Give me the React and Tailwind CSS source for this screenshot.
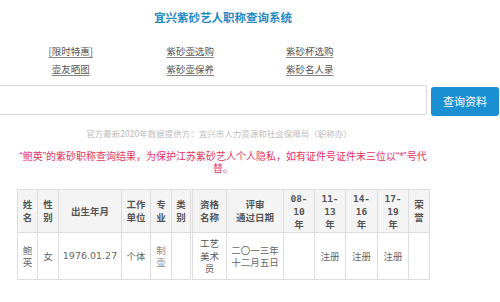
import React from "react";

const links = [
  ["[限时特惠]", "紫砂壶选购", "紫砂杯选购"],
  ["壶友晒图", "紫砂壶保养", "紫砂名人录"],
];

// column widths in px, taken from the screenshot
const widths = [20, 21, 63, 29, 21, 20, 35, 57, 31, 31, 32, 31, 21];

const Q = ({ children }) => (
  <span className="font-['Liberation_Sans',sans-serif]">{children}</span>
);

export default function App() {
  return (
    <div className="w-[500px] h-[302px] overflow-hidden bg-white font-['Noto_Sans_CJK_SC',sans-serif]">
      <h1 className="w-[446px] pt-[10px] text-center text-[11.5px] font-bold leading-[14px] text-[#2389c4]">
        宜兴紫砂艺人职称查询系统
      </h1>

      {/* 导航链接 */}
      <div className="ml-[11px] mt-[20px] grid w-[478px] grid-cols-4 gap-y-[4px] text-[9.5px] leading-[14px] text-[#555]">
        {links.map((row) =>
          row
            .concat([""])
            .map((t, i) => (
              <div key={t + i} className="text-center">
                {t && <a className="underline decoration-[#888] underline-offset-2">{t}</a>}
              </div>
            ))
        )}
      </div>

      {/* 搜索 */}
      <div className="mt-[9px] flex items-start">
        <input
          className="h-[30px] w-[427px] rounded-r-[2px] border border-l-0 border-[#d6d6d6] bg-white outline-none"
          defaultValue=""
        />
        <button className="ml-[4px] mt-[2px] h-[29px] w-[68px] rounded-[3px] bg-[#1a8fd2] text-[11px] text-white">
          查询资料
        </button>
      </div>

      <p className="mt-[11px] w-[438px] text-center text-[8.5px] leading-[12px] text-[#bcbcbc]">
        官方最新2020年数据提供方：宜兴市人力资源和社会保障局（职称办）
      </p>

      <div className="ml-[17px] mt-[11px] w-[412px] text-center text-[10px] leading-[12px] text-[#e63366]">
        <p className="h-[12px] whitespace-nowrap">
          <Q>“</Q>鲍英<Q>”</Q>的紫砂职称查询结果，为保护江苏紫砂艺人个人隐私，如有证件号证件末三位以<Q>“*”</Q>号代
        </p>
        <p className="h-[12px]">替。</p>
      </div>

      {/* 结果表格 */}
      <table className="ml-[17px] mt-[15px] w-[412px] table-fixed border-collapse text-center text-[9.5px] text-[#666]">
        <colgroup>
          {widths.map((w, i) => (
            <col key={i} style={{ width: w }} />
          ))}
        </colgroup>
        <thead>
          <tr className="h-[43px] bg-[#f4f4f4] font-bold leading-[13px] text-[#555]">
            <th className="border border-[#ddd] px-[4px]">姓名</th>
            <th className="border border-[#ddd] px-[4px]">性别</th>
            <th className="border border-[#ddd] px-[2px]">出生年月</th>
            <th className="border border-[#ddd] px-[3px]">工作单位</th>
            <th className="border border-[#ddd] px-[4px]">专业</th>
            <th className="border border-[#ddd] px-[4px]">类别</th>
            <th className="border border-[#ddd] border-l-[3px] border-l-[#ddd] border-double px-[3px]">资格名称</th>
            <th className="border border-[#ddd] px-[2px]">
              评审
              <br />
              通过日期
            </th>
            {["08-", "11-", "14-", "17-"].map((a, i) => (
              <th key={a} className="border border-[#ddd] px-0">
                <span className="font-['DejaVu_Sans_Mono',monospace] text-[9.5px]">
                  {a}
                  <br />
                  {["10", "13", "16", "19"][i]}
                </span>
                <br />年
              </th>
            ))}
            <th className="border border-[#ddd] px-[4px]">荣誉</th>
          </tr>
        </thead>
        <tbody>
          <tr className="h-[47px] leading-[12.5px]">
            <td className="border border-[#ddd] px-[4px]">鲍英</td>
            <td className="border border-[#ddd] px-[4px]">女</td>
            <td className="border border-[#ddd] px-0 font-['DejaVu_Sans','Noto_Sans_CJK_SC',sans-serif] text-[9.5px]">
              1976.01.27
            </td>
            <td className="border border-[#ddd] px-[3px]">个体</td>
            <td className="border border-[#ddd] px-[4px] text-[#888]">制壶</td>
            <td className="border border-[#ddd]"></td>
            <td className="border border-[#ddd] border-l-[3px] border-l-[#ddd] border-double px-[3px] text-[#555]">
              工艺美术员
            </td>
            <td className="border border-[#ddd] px-[2px]">二〇一三年十二月五日</td>
            <td className="border border-[#ddd]"></td>
            <td className="border border-[#ddd]">注册</td>
            <td className="border border-[#ddd]">注册</td>
            <td className="border border-[#ddd]">注册</td>
            <td className="border border-[#ddd]"></td>
          </tr>
        </tbody>
      </table>
    </div>
  );
}
